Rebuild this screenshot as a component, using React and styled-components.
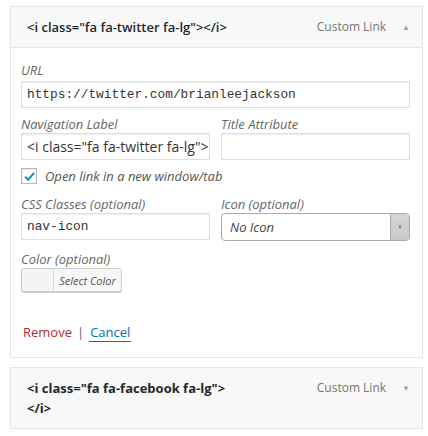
import React from "react";
import styled, { createGlobalStyle } from "styled-components";

const GlobalStyle = createGlobalStyle`
  body {
    margin: 0;
    background: #fff;
    font-family: "Open Sans", sans-serif;
  }
`;

const Page = styled.div`
  padding: 6px 5px 0 10px;
  display: flex;
  flex-direction: column;
  gap: 9px;
`;

const Item = styled.div`
  border: 1px solid #e5e5e5;
  background: ${(p) => (p.open ? "#fff" : "#f8f8f8")};
`;

const Bar = styled.div`
  display: flex;
  align-items: flex-start;
  justify-content: space-between;
  background: #f8f8f8;
  padding: 10px 12px 10px 16px;
  border-bottom: ${(p) => (p.open ? "1px solid #e5e5e5" : "none")};
`;

const Title = styled.div`
  font-size: 13px;
  font-weight: ${(p) => (p.bold ? 700 : 600)};
  color: #23282d;
  line-height: 20px;
  max-width: 200px;
`;

const Meta = styled.div`
  display: flex;
  align-items: center;
  gap: 16px;
  font-size: 12px;
  color: #777;
  line-height: 20px;
`;

const Arrow = styled.span`
  font-size: 8px;
  color: #a0a5aa;
`;

const Settings = styled.div`
  padding: 14px 12px 15px 10px;
  display: flex;
  flex-direction: column;
`;

const Row = styled.div`
  display: grid;
  grid-template-columns: 189px 189px;
  column-gap: 11px;
  margin-top: ${(p) => p.top || 0}px;
`;

const Field = styled.div`
  display: flex;
  flex-direction: column;
  margin-top: ${(p) => p.top || 0}px;
`;

const Label = styled.label`
  font-size: 13px;
  font-style: italic;
  color: #666;
  line-height: 16px;
  margin-bottom: ${(p) => p.gap ?? 1}px;
`;

const Input = styled.div`
  height: 27px;
  box-sizing: border-box;
  border: 1px solid #ddd;
  box-shadow: inset 0 1px 2px rgba(0, 0, 0, 0.07);
  padding: 0 5px;
  display: flex;
  align-items: center;
  font-family: ${(p) => (p.mono ? '"Liberation Mono", monospace' : '"Open Sans", sans-serif')};
  font-size: ${(p) => (p.mono ? "12.8px" : "14px")};
  color: #333;
  white-space: nowrap;
  overflow: hidden;
`;

const Check = styled.div`
  display: flex;
  align-items: center;
  gap: 8px;
  margin-top: 8px;
  font-size: 13px;
  font-style: italic;
  color: #555;
  line-height: 16px;
`;

const Box = styled.span`
  width: 16px;
  height: 16px;
  box-sizing: border-box;
  border: 1px solid #b4b9be;
  box-shadow: inset 0 1px 2px rgba(0, 0, 0, 0.1);
  display: flex;
  align-items: center;
  justify-content: center;
`;

const Select = styled.div`
  height: 28px;
  box-sizing: border-box;
  border: 1px solid #aaa;
  border-radius: 4px;
  display: flex;
  overflow: hidden;
`;

const SelectText = styled.div`
  flex: 1;
  display: flex;
  align-items: center;
  padding: 0 8px;
  font-size: 13px;
  font-style: italic;
  color: #444;
`;

const SelectArrow = styled.div`
  width: 18px;
  background: linear-gradient(#d4d4d4, #c8c8c8);
  border-left: 1px solid #aaa;
  display: flex;
  align-items: center;
  justify-content: center;
  font-size: 6px;
  color: #888;
`;

const ColorButton = styled.div`
  display: flex;
  width: 101px;
  height: 24px;
  box-sizing: border-box;
  border: 1px solid #ccc;
  border-radius: 3px;
  background: #f7f7f7;
  box-shadow: 0 1px 0 #ccc;
  overflow: hidden;
`;

const Swatch = styled.span`
  width: 31px;
  background: #f4f4f4;
  border-right: 1px solid #ddd;
`;

const ColorText = styled.span`
  flex: 1;
  display: flex;
  align-items: center;
  justify-content: center;
  font-size: 11px;
  font-style: italic;
  color: #555;
`;

const Actions = styled.div`
  margin-top: 30px;
  display: flex;
  align-items: center;
  gap: 5px;
  font-size: 13px;
  line-height: 20px;
  padding-left: 2px;
`;

const Remove = styled.a`
  color: #b32d2e;
`;

const Sep = styled.span`
  color: #666;
`;

const Cancel = styled.a`
  color: #0073aa;
  border-bottom: 1px solid #0073aa;
  padding: 0 1px;
  line-height: 18px;
`;

export default function App() {
  return (
    <>
      <GlobalStyle />
      <Page>
        <Item open>
          <Bar open>
            <Title>&lt;i class="fa fa-twitter fa-lg"&gt;&lt;/i&gt;</Title>
            <Meta>
              <span>Custom Link</span>
              <Arrow>▲</Arrow>
            </Meta>
          </Bar>
          <Settings>
            <Field>
              <Label gap={3}>URL</Label>
              <Input mono>https://twitter.com/brianleejackson</Input>
            </Field>
            <Row top={8}>
              <Field>
                <Label>Navigation Label</Label>
                <Input>&lt;i class="fa fa-twitter fa-lg"&gt;&lt;/i&gt;</Input>
              </Field>
              <Field>
                <Label>Title Attribute</Label>
                <Input />
              </Field>
            </Row>
            <Check>
              <Box>
                <svg width="13" height="13" viewBox="0 0 20 20">
                  <path d="M3 10.5 L8 15 L17 4.5" fill="none" stroke="#1e8cbe" strokeWidth="3" />
                </svg>
              </Box>
              Open link in a new window/tab
            </Check>
            <Row top={12}>
              <Field>
                <Label>CSS Classes (optional)</Label>
                <Input mono>nav-icon</Input>
              </Field>
              <Field>
                <Label>Icon (optional)</Label>
                <Select>
                  <SelectText>No Icon</SelectText>
                  <SelectArrow>▼</SelectArrow>
                </Select>
              </Field>
            </Row>
            <Field top={10}>
              <Label>Color (optional)</Label>
              <ColorButton>
                <Swatch />
                <ColorText>Select Color</ColorText>
              </ColorButton>
            </Field>
            <Actions>
              <Remove>Remove</Remove>
              <Sep>|</Sep>
              <Cancel>Cancel</Cancel>
            </Actions>
          </Settings>
        </Item>
        <Item>
          <Bar>
            <Title bold>&lt;i class="fa fa-facebook fa-lg"&gt;&lt;/i&gt;</Title>
            <Meta>
              <span>Custom Link</span>
              <Arrow>▼</Arrow>
            </Meta>
          </Bar>
        </Item>
      </Page>
    </>
  );
}
